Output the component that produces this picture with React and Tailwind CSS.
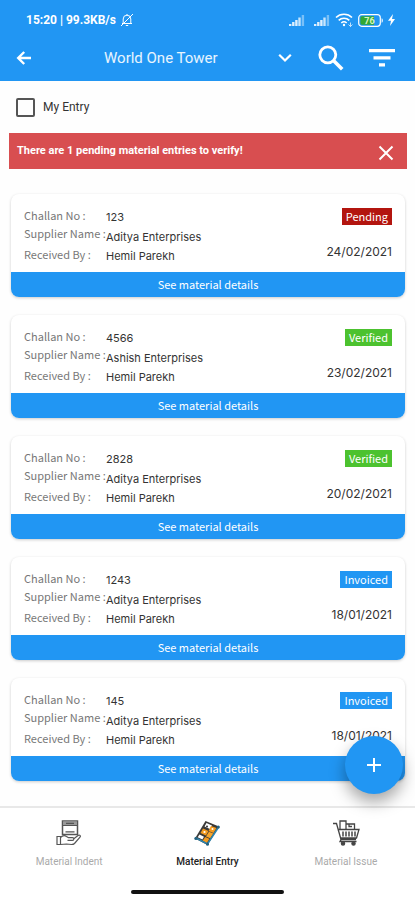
import { useState } from "react"

const entries = [
  { challan: "123",  supplier: "Aditya Enterprises", receiver: "Hemil Parekh", status: "Pending",  date: "24/02/2021" },
  { challan: "4566", supplier: "Ashish Enterprises", receiver: "Hemil Parekh", status: "Verified", date: "23/02/2021" },
  { challan: "2828", supplier: "Aditya Enterprises", receiver: "Hemil Parekh", status: "Verified", date: "20/02/2021" },
  { challan: "1243", supplier: "Aditya Enterprises", receiver: "Hemil Parekh", status: "Invoiced", date: "18/01/2021" },
  { challan: "145",  supplier: "Aditya Enterprises", receiver: "Hemil Parekh", status: "Invoiced", date: "18/01/2021" },
]

const statusColors = {
  Pending: "bg-[#b3150f]",
  Verified: "bg-[#4cc22f]",
  Invoiced: "bg-[#2196f3]",
}

function SignalIcon() {
  return (
    <svg width="16" height="12" viewBox="0 0 16 12" fill="#fff" aria-hidden="true">
      <path d="M0 10h2.4v2H0zM3.1 8h2.4v4H3.1zM6.2 6h2.4v6H6.2z" opacity=".85" />
      <path d="M9.3 3.500h2.400V12H9.300z" opacity=".75" />
      <path d="M12.700 1h2.400v11h-2.400z" opacity=".4" />
    </svg>
  )
}

function StatusBar() {
  return (
    <div className="flex h-10 items-center justify-between pl-[26px] pr-5 font-['Roboto',sans-serif] text-[12px] font-bold text-white">
      <div className="flex items-center gap-1">
        <span className="whitespace-nowrap">15:20 | 99.3KB/s</span>
        <svg width="14" height="14" viewBox="0 0 14 14" fill="none" stroke="#fff" strokeWidth="1" aria-hidden="true">
          <path d="M2 10.5h10M3.2 10.5V6a3.8 3.8 0 0 1 7.6 0v4.5M5.8 12.5h2.4M1 13 13 1M7 2.2V1" />
        </svg>
      </div>
      <div className="flex items-center gap-1">
        <SignalIcon />
        <span className="w-px" />
        <SignalIcon />
        <svg width="20" height="14" viewBox="0 0 20 14" fill="none" stroke="#fff" strokeWidth="1.6" aria-hidden="true">
          <path d="M2 4.500a11.500 11.500 0 0 1 16 0M4.700 7.400a7.600 7.600 0 0 1 10.600 0M7.300 10a4 4 0 0 1 5.400 0" />
          <circle cx="10" cy="12" r="1.200" fill="#fff" stroke="none" />
          <path d="M16.5 9.5v4M14.5 11.5l2 2 2-2" strokeWidth="1" opacity=".7" />
        </svg>
        <svg width="26" height="13" viewBox="0 0 26 13" aria-hidden="true">
          <rect x=".7" y=".7" width="21.6" height="11.6" rx="3" fill="#2196f3" stroke="#fff" strokeWidth="1.2" />
          <path d="M4 2.3h12v8.4H4a1.6 1.6 0 0 1-1.6-1.6V3.9A1.6 1.6 0 0 1 4 2.3z" fill="#32a832" />
          <path d="M23.6 4.2c1.6.4 1.6 4.2 0 4.6z" fill="#fff" />
          <text x="11.5" y="9.6" textAnchor="middle" fontSize="9" fontWeight="700" fill="#d9f5c0">76</text>
        </svg>
        <svg width="7" height="12" viewBox="0 0 7 12" fill="#fff" aria-hidden="true">
          <path d="M5 0 0 6.8h3L2 12l5-7H4z" />
        </svg>
      </div>
    </div>
  )
}

function Header() {
  return (
    <header className="bg-[#2196f3] pb-px">
      <StatusBar />
      <div className="flex h-10 items-center pl-4 pr-5 pb-1 text-white">
        <button aria-label="Back" className="flex w-4 justify-center">
          <svg width="16" height="16" viewBox="0 0 16 16" fill="none" stroke="#fff" strokeWidth="2.4">
            <path d="M15 8H3M8.2 2 2.2 8l6 6" />
          </svg>
        </button>
        <button className="ml-[72px] flex grow items-center justify-between pr-[26px] font-['Roboto',sans-serif] text-[15px] text-white/90">
          World One Tower
          <svg width="14" height="10" viewBox="0 0 14 10" fill="none" stroke="#fff" strokeWidth="2.2" aria-hidden="true">
            <path d="M1.2 1.7 7 7.5l5.8-5.8" />
          </svg>
        </button>
        <button aria-label="Search" className="mr-[25px]">
          <svg width="26" height="26" viewBox="0 0 26 26" fill="none" stroke="#fff">
            <circle cx="9.8" cy="9.8" r="8" strokeWidth="2.8" />
            <path d="m15.5 15.5 8.7 8.7" strokeWidth="3.6" />
          </svg>
        </button>
        <button aria-label="Filter">
          <svg width="26" height="18" viewBox="0 0 26 18" fill="#fff">
            <path d="M0 0h26v3.2H0zM4.5 7.2h17v3.2h-17zM10 14.2h6v3.2h-6z" />
          </svg>
        </button>
      </div>
    </header>
  )
}

function EntryCard({ entry }) {
  return (
    <li className="overflow-hidden rounded-lg bg-white shadow-[0_1px_3px_rgba(0,0,0,0.2)]">
      <div className="flex h-[78px] justify-between px-[13px] pt-3">
        <div className="flex text-[11px]">
          <div className="w-[82px] whitespace-nowrap font-['Noto_Sans_CJK_SC',sans-serif] text-[#777]">
            <p className="leading-[18px]">Challan No :</p>
            <p className="leading-[18px]">Supplier Name :</p>
            <p className="leading-6">Received By :</p>
          </div>
          <div className="whitespace-nowrap pt-px font-['Inter',sans-serif] text-[#333]">
            <p className="leading-5">{entry.challan}</p>
            <p className="leading-5">{entry.supplier}</p>
            <p className="leading-[18px]">{entry.receiver}</p>
          </div>
        </div>
        <div className="flex flex-col items-end justify-between pb-3 pt-0.5">
          <span className={`px-1 font-['Noto_Sans_CJK_SC',sans-serif] text-[11px] leading-[17px] text-white ${statusColors[entry.status]}`}>
            {entry.status}
          </span>
          <span className="font-['Inter',sans-serif] text-[12px] leading-4 text-[#333]">{entry.date}</span>
        </div>
      </div>
      <button className="block h-[25px] w-full bg-[#2196f3] font-['Noto_Sans_CJK_SC',sans-serif] text-[11px] text-white">
        See material details
      </button>
    </li>
  )
}

function IndentIcon() {
  return (
    <svg width="26" height="26" viewBox="0 0 26 26" fill="none" stroke="#555" strokeWidth="1.2" aria-hidden="true">
      <path d="M6.5 14.500V1h15v13.500z" strokeWidth="1.500" />
      <path d="M7 1.500h14v3.800H7z" fill="#999" stroke="none" />
      <path d="M7 5.500h14M10 3.300h8M9.500 11.800h9" />
      <path d="M1 16.500h3.500v8H1zM4.500 17.500c2-2 4-2.500 6-1l2 1.200h4c1.800 0 1.800 2.600 0 2.600h-5M17.500 19l4.500-3.500c1.600-1.200 3.200.3 2 1.700l-5.500 6.300c-1 1-2 1-3 1l-5-.5-6 .500" />
    </svg>
  )
}

function EntryIcon() {
  return (
    <svg width="26" height="26" viewBox="0 0 26 26" aria-hidden="true">
      <path d="M11.5 1 25 6.5 13.5 25 1 18.5z" fill="#3b3a38" />
      <path d="M12.5 3 18 5.500l-2 3.500-5.500-2.500z" fill="#fff" />
      <path d="m17 6 5.500 2-3 5-5-2z" fill="#f39a1f" />
      <path d="m9 8.500 5.500 2.500-2.500 4.500-5.500-2.500z" fill="#f39a1f" />
      <path d="m15 11.700 4.300 1.800-3 4.800-4.300-1.900z" fill="#f7a52b" />
      <path d="m5.5 14.5 4.500 2.300-1.600 2.700-4.700-2.300z" fill="#fff" />
      <path d="m11.2 17 4.200 1.800-2.600 4.200-4.200-2.200z" fill="#f39a1f" />
      <path d="M1 17.5 13.5 24 25 6.5" fill="none" stroke="#2f84ad" strokeWidth="1.6" />
      <circle cx="1.8" cy="18.5" r="1.5" fill="#24617f" />
      <circle cx="13.5" cy="24.3" r="1.5" fill="#24617f" />
      <circle cx="24.3" cy="7" r="1.5" fill="#24617f" />
      <circle cx="13" cy="6.500" r="1" fill="#333" />
      <circle cx="10.5" cy="12" r="1.1" fill="#fff" />
      <circle cx="18.5" cy="9" r="1" fill="#fff" />
    </svg>
  )
}

function IssueIcon() {
  return (
    <svg width="28" height="26" viewBox="0 0 28 26" fill="none" stroke="#444" strokeWidth="1.3" aria-hidden="true">
      <path d="M1 3.5h3.5L9 19.5h15M5.5 9.5H27L24.5 18h-16M8 9V1h6v8M14 4h8.5v5M17 4v2.5h3" />
      <path d="M11 11.5v5M14 11.5v5M17 11.5v5M20 11.5v5M23 11.5v5" strokeWidth="1.5" />
      <path d="m9 19.5-1 2h16.500" />
      <circle cx="11" cy="23.5" r="1.6" fill="#444" />
      <circle cx="21.5" cy="23.5" r="1.6" fill="#444" />
    </svg>
  )
}

const tabs = [
  { name: "Material Indent", Icon: IndentIcon },
  { name: "Material Entry",  Icon: EntryIcon },
  { name: "Material Issue",  Icon: IssueIcon },
]

function BottomNav() {
  return (
    <nav className="border-t-2 border-[#e8e8e8] bg-white">
      <div className="grid grid-cols-3 pt-3">
        {tabs.map(({ name, Icon }) => (
          <a
            key={name}
            href="#"
            className={`flex flex-col items-center gap-2 font-['Roboto',sans-serif] text-[10px] leading-4 ${
              name === "Material Entry" ? "font-medium text-[#222]" : "text-[#aaa]"
            }`}
          >
            <Icon />
            {name}
          </a>
        ))}
      </div>
      <div className="mx-auto mb-[6px] mt-5 h-1 w-[37%] rounded-full bg-[#111]" />
    </nav>
  )
}

function App() {
  const [mine, setMine] = useState(false)
  const [showAlert, setShowAlert] = useState(true)

  return (
    <div className="flex min-h-screen flex-col bg-[#fefefe]">
      <Header />
      <main className="relative grow pb-6">
        <label className="flex h-[52px] w-fit items-center gap-2 pl-4 font-['Roboto',sans-serif] text-[12px] text-[#333]">
          <input
            type="checkbox"
            checked={mine}
            onChange={e => setMine(e.target.checked)}
            className="size-[19px] appearance-none rounded-[2px] border-2 border-[#555] checked:bg-[#2196f3]"
          />
          My Entry
        </label>

        {showAlert && (
          <div role="alert" className="ml-[9px] mr-2 flex h-9 items-center justify-between bg-[#d84e50] pl-2 pr-[13px] text-white">
            <p className="font-['Roboto',sans-serif] text-[11px] font-bold">There are 1 pending material entries to verify!</p>
            <button aria-label="Dismiss" onClick={() => setShowAlert(false)} className="pt-1">
              <svg width="16" height="16" viewBox="0 0 16 16" fill="none" stroke="#fff" strokeWidth="2">
                <path d="m1.5 1.5 13 13M14.5 1.5l-13 13" />
              </svg>
            </button>
          </div>
        )}

        <ul className="flex flex-col gap-[18px] pl-[11px] pr-[10px] pt-[25px]">
          {entries.map(entry => (
            <EntryCard key={entry.challan} entry={entry} />
          ))}
        </ul>

        <button
          aria-label="Add entry"
          className="absolute bottom-3 right-3 flex size-[58px] items-center justify-center rounded-full bg-[#2196f3] shadow-[0_8px_16px_rgba(0,0,0,0.35)]"
        >
          <svg width="14" height="14" viewBox="0 0 14 14" fill="none" stroke="#fff" strokeWidth="2">
            <path d="M7 0v14M0 7h14" />
          </svg>
        </button>
      </main>
      <BottomNav />
    </div>
  )
}

export default App
